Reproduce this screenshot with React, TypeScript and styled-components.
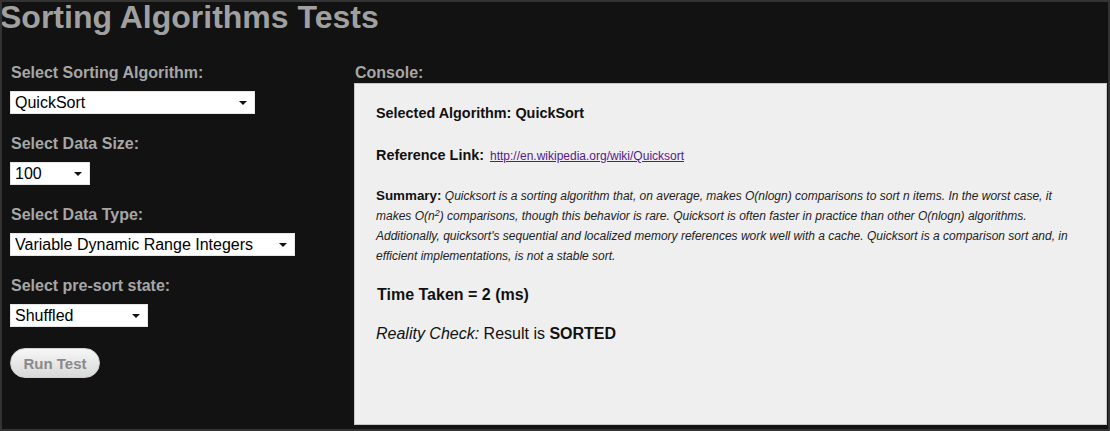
import React from "react";
import styled, { createGlobalStyle } from "styled-components";

const GlobalStyle = createGlobalStyle`
  html, body {
    margin: 0;
    padding: 0;
    background: #111111;
  }
  body {
    font-family: "Liberation Sans", Arial, sans-serif;
  }
`;

const Page = styled.div`
  box-sizing: border-box;
  width: 1110px;
  height: 431px;
  border: 2px solid #333333;
  background: #121212;
  display: flex;
  flex-direction: column;
  overflow: hidden;
`;

const Title = styled.h1`
  margin: 0 0 0 -2px;
  font-size: 32px;
  line-height: 30px;
  font-weight: bold;
  color: #a0a0a0;
`;

const Main = styled.div`
  display: flex;
  flex-direction: row;
  padding-top: 32px;
`;

const Sidebar = styled.div`
  width: 344px;
  padding-left: 8px;
  display: flex;
  flex-direction: column;
`;

const Field = styled.div`
  display: flex;
  flex-direction: column;
  align-items: flex-start;
  margin-bottom: 21px;
`;

const Label = styled.div<{ $gap?: number }>`
  font-size: 16px;
  line-height: 18px;
  font-weight: bold;
  color: #a6a6a6;
  margin-bottom: ${(p) => (p.$gap ?? 9)}px;
  padding-left: 1px;
`;

const SelectWrap = styled.span<{ $w: number }>`
  position: relative;
  display: inline-block;
  width: ${(p) => p.$w}px;
  height: 23px;
  &::after {
    content: "";
    position: absolute;
    right: 8px;
    top: 10px;
    border-left: 4px solid transparent;
    border-right: 4px solid transparent;
    border-top: 4px solid #111;
    pointer-events: none;
  }
`;

const Select = styled.select`
  appearance: none;
  -webkit-appearance: none;
  box-sizing: border-box;
  width: 100%;
  height: 23px;
  margin: 0;
  padding: 0 0 0 4px;
  border: 1px solid #e6e6e6;
  border-radius: 0;
  background: #ffffff;
  color: #000;
  font-family: "Liberation Sans", Arial, sans-serif;
  font-size: 16px;
  line-height: 21px;
  outline: none;
`;

const RunButton = styled.button`
  box-sizing: border-box;
  width: 90px;
  height: 30px;
  border: 1px solid #cfcfcf;
  border-radius: 15px;
  background: linear-gradient(#f6f6f6, #d9d9d9);
  color: #8a8a8a;
  font-family: "Liberation Sans", Arial, sans-serif;
  font-size: 15px;
  font-weight: bold;
  padding: 0;
  cursor: pointer;
`;

const ConsoleColumn = styled.div`
  flex: 1;
  display: flex;
  flex-direction: column;
  margin-right: 1px;
`;

const ConsoleBox = styled.div`
  box-sizing: border-box;
  height: 342px;
  border: 1px solid #c8c8c8;
  background: #efefef;
  padding: 21px 21px;
  color: #111;
  display: flex;
  flex-direction: column;
`;

const Heading = styled.div<{ $gap: number }>`
  font-size: 14.4px;
  line-height: 17px;
  font-weight: bold;
  margin-bottom: ${(p) => p.$gap}px;
`;

const LinkText = styled.a`
  font-size: 12px;
  font-weight: normal;
  color: #551a8b;
  text-decoration: underline;
  margin-left: 2px;
`;

const Summary = styled.div`
  font-size: 12px;
  line-height: 20px;
  margin-bottom: 19px;
  color: #222;
`;

const SummaryLabel = styled.b`
  font-size: 13.4px;
  color: #111;
`;

const SummaryText = styled.i`
  font-style: italic;
`;

const Sup = styled.sup`
  font-size: 9px;
  line-height: 0;
  vertical-align: 4px;
`;

const TimeTaken = styled.div`
  font-size: 16px;
  line-height: 19px;
  font-weight: bold;
  margin-bottom: 20px;
  padding-left: 1px;
`;

const Reality = styled.div`
  font-size: 16px;
  line-height: 19px;
  color: #111;
`;

export default function App() {
  return (
    <>
      <GlobalStyle />
      <Page>
        <Title>Sorting Algorithms Tests</Title>
        <Main>
          <Sidebar>
            <Field>
              <Label>Select Sorting Algorithm:</Label>
              <SelectWrap $w={245}>
                <Select defaultValue="QuickSort">
                  <option>QuickSort</option>
                  <option>MergeSort</option>
                  <option>HeapSort</option>
                  <option>BubbleSort</option>
                </Select>
              </SelectWrap>
            </Field>
            <Field>
              <Label>Select Data Size:</Label>
              <SelectWrap $w={80}>
                <Select defaultValue="100">
                  <option>100</option>
                  <option>1000</option>
                  <option>10000</option>
                </Select>
              </SelectWrap>
            </Field>
            <Field>
              <Label>Select Data Type:</Label>
              <SelectWrap $w={285}>
                <Select defaultValue="Variable Dynamic Range Integers">
                  <option>Variable Dynamic Range Integers</option>
                </Select>
              </SelectWrap>
            </Field>
            <Field>
              <Label>Select pre-sort state:</Label>
              <SelectWrap $w={138}>
                <Select defaultValue="Shuffled">
                  <option>Shuffled</option>
                  <option>Sorted</option>
                  <option>Reversed</option>
                </Select>
              </SelectWrap>
            </Field>
            <div>
              <RunButton>Run Test</RunButton>
            </div>
          </Sidebar>
          <ConsoleColumn>
            <Label $gap={1}>Console:</Label>
            <ConsoleBox>
              <Heading $gap={25}>Selected Algorithm: QuickSort</Heading>
              <Heading $gap={21}>
                Reference Link:{" "}
                <LinkText href="#">http://en.wikipedia.org/wiki/Quicksort</LinkText>
              </Heading>
              <Summary>
                <SummaryLabel>Summary:</SummaryLabel>{" "}
                <SummaryText>
                  Quicksort is a sorting algorithm that, on average, makes O(nlogn) comparisons to sort n
                  items. In the worst case, it makes O(n<Sup>2</Sup>) comparisons, though this behavior is
                  rare. Quicksort is often faster in practice than other O(nlogn) algorithms. Additionally,
                  quicksort's sequential and localized memory references work well with a cache. Quicksort
                  is a comparison sort and, in efficient implementations, is not a stable sort.
                </SummaryText>
              </Summary>
              <TimeTaken>Time Taken = 2 (ms)</TimeTaken>
              <Reality>
                <i>Reality Check:</i> Result is <b>SORTED</b>
              </Reality>
            </ConsoleBox>
          </ConsoleColumn>
        </Main>
      </Page>
    </>
  );
}
